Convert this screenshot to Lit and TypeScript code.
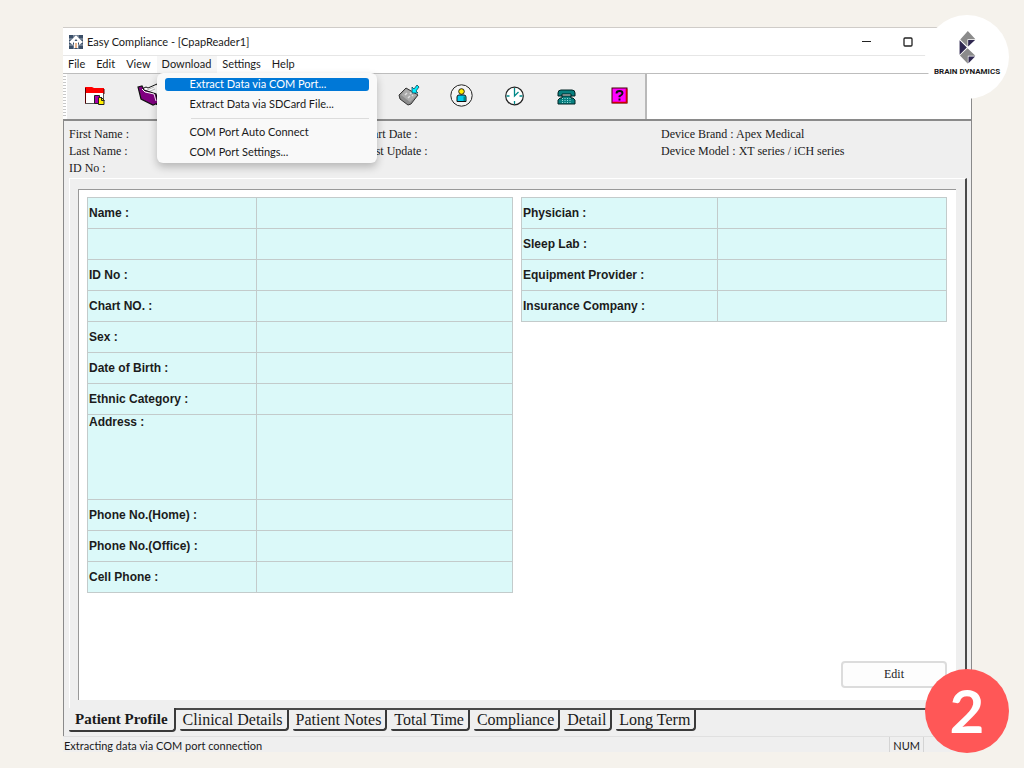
import { LitElement, html, css, svg } from "lit";
import { customElement, property } from "lit/decorators.js";
import { classMap } from "lit/directives/class-map.js";

const ICONS: Record<string, unknown> = {
  records: svg`
    <path d="M5.500 9.500h18v14h-18z" fill="#fff" stroke="#555" />
    <path d="M5 7h7l2 1h10v5H5z" fill="#f00" />
    <path d="M5.500 23.500V8M24 9v5" stroke="#500" />
    <path d="M14.500 15.500h5v8h-5z" fill="#a0a" stroke="#222" />
    <path d="M18.500 17.500h3l2.500 2.500v4.500h-5.500z" fill="#fe0" stroke="#222" />
    <path d="M21.500 17v3.500h3" fill="none" stroke="#222" />`,
  folder: svg`
    <path d="M9 9l4-2 2 1 9-4 4 14-4 7z" fill="#fff" stroke="#111" />
    <path d="M12 11l9-4M13 13l9-4" stroke="#bbb" />
    <path d="M5 7l4-1 2 4 12 4 2 9-5 2-12-6z" fill="#800080" stroke="#111" stroke-width="1.200" />
    <path d="M9 9l3 3 9 2 2 7" fill="none" stroke="#fff" />`,
  download: svg`
    <path d="M5 15l7-7 12 7-7 9-3 1-8-6z" fill="#8c8c8c" stroke="#333" />
    <path d="M12 9l11 6-7 7-9-7z" fill="#aaa" />
    <path d="M11 15l2-2m1 5l2-2m0-2l2-2m0 4l1-1" stroke="#ddd" stroke-width="1.500" />
    <path d="M18 7v6h6l-2-2 3-4-2-2-3 4z" fill="#0ef" stroke="#145" stroke-width=".8" />`,
  patient: svg`
    <circle cx="14.500" cy="15.500" r="10.700" fill="#f4f4f4" stroke="#222" />
    <circle cx="14.500" cy="11.500" r="2.800" fill="#fe0" stroke="#111" stroke-width=".9" />
    <path d="M10 21.500V17q0-2 2-2h5q2 0 2 2v4.500z" fill="#0ce" stroke="#111" />
    <path d="M16.500 16.500v4.500h2v-4.500z" fill="#088" />`,
  clock: svg`
    <circle cx="15.500" cy="16" r="8.800" fill="#fff" stroke="#222" stroke-width="1.200" />
    <path d="M15.500 8v8l4-4M15.500 21v3M7.500 16h3M20.500 16h3" fill="none" stroke="#088" stroke-width="1.300" />`,
  phone: svg`
    <path d="M7 15v-2q0-3 3-3h11q3 0 3 3v3h-4v-2h-9v2H7z" fill="#088080" stroke="#022" />
    <path d="M11 16h9v2h2l2 2v4H7v-4l2-2h2z" fill="#088080" stroke="#022" />
    <path d="M11 18.500h9M11 20.500h9M11 22.500h9" stroke="#9dd" stroke-dasharray="1 1.500" />`,
  help: svg`
    <rect x="8" y="8" width="15" height="15" fill="#f0f" stroke="#400" />
    <path d="M8.500 22.500h14V9" fill="none" stroke="#c00" stroke-width="1.600" />
    <path d="M12.500 13.500q0-2.500 3-2.500t3 2.300q0 1.500-3 3v1M15.500 18.500v2" fill="none" stroke="#111" stroke-width="1.900" />`,
};

const TOOLS = [
  { icon: "records", label: "Records", slot: 1 },
  { icon: "folder", label: "Open", slot: 2 },
  { icon: "download", label: "Download", slot: 7 },
  { icon: "patient", label: "Patient", slot: 8 },
  { icon: "clock", label: "Time", slot: 9 },
  { icon: "phone", label: "Phone", slot: 10 },
  { icon: "help", label: "Help", slot: 11 },
];

const MENUS = ["File", "Edit", "View", "Download", "Settings", "Help"];
const COMMANDS = [
  ["Extract Data via COM Port...", "Extract Data via SDCard File..."],
  ["COM Port Auto Connect", "COM Port Settings..."],
];
const TABS = ["Patient Profile", "Clinical Details", "Patient Notes", "Total Time", "Compliance", "Detail", "Long Term"];
const PERSONAL = ["Name :", "", "ID No :", "Chart NO. :", "Sex :", "Date of Birth :", "Ethnic Category :", "Address :", "Phone No.(Home) :", "Phone No.(Office) :", "Cell Phone :"];
const PROVIDERS = ["Physician :", "Sleep Lab :", "Equipment Provider :", "Insurance Company :"];

@customElement("profile-table")
export class ProfileTable extends LitElement {
  @property({ attribute: false }) rows: string[] = [];
  @property() tall = "";

  static styles = css`
    :host { display: block; }
    table { width: 100%; border-collapse: collapse; table-layout: fixed; background: #dbf9f9; }
    th, td { box-sizing: border-box; height: 31px; padding: 0 1px; border: 1px solid #c3cbcb; }
    th { width: var(--label-width, 40%); text-align: left; font: bold 12px/14px "Liberation Sans", Arial, sans-serif; color: #1c1c1c; }
    .tall th { height: 85px; vertical-align: top; }
  `;

  render() {
    return html`<table>
      <tbody>
        ${this.rows.map((label) => html`<tr class=${classMap({ tall: label !== "" && label === this.tall })}>
          <th scope="row">${label}</th><td></td>
        </tr>`)}
      </tbody>
    </table>`;
  }
}

@customElement("app-root")
export class AppRoot extends LitElement {
  static styles = css`
    :host {
      display: block; position: relative; box-sizing: border-box; min-height: 100vh;
      padding: 27px 52px 16px 63px; background: #f5f2ec; color: #1a1a1a;
      font: 11px/15px Lato, "Open Sans", sans-serif;
    }
    button { margin: 0; padding: 0; border: 0; background: none; color: inherit; font: inherit; text-align: left; }
    svg { display: block; }
    .window { display: flex; flex-direction: column; min-height: calc(100vh - 43px); background: #efefef; }
    .titlebar {
      box-sizing: border-box; height: 29px; display: flex; align-items: center; gap: 4px; padding: 0 59px 0 6px;
      background: #fff; border-top: 1px solid #cfccc8; border-bottom: 1px solid #e6e6e6;
    }
    .title { flex: 1; margin: 0; font: inherit; }
    .controls { display: flex; gap: 27px; }
    .menubar {
      box-sizing: border-box; height: 18px; display: flex; padding-right: 40px;
      background: #fff; border-bottom: 1px solid #bdbdbd;
    }
    .menu { position: relative; display: flex; }
    .menu > button { padding: 0 6px 2px 5px; }
    .menu.open > button { background: #f6f6f6; }
    .popup {
      position: absolute; z-index: 2; top: 100%; left: 0; box-sizing: border-box; width: 220px;
      display: flex; flex-direction: column; gap: 7px; padding: 5px 8px 4px;
      background: #f9f9f9; border-radius: 6px; box-shadow: 0 4px 9px rgba(0, 0, 0, .24);
    }
    .popup button { padding: 0 25px 2px; line-height: 11px; border-radius: 3px; white-space: nowrap; }
    .popup .current { background: #0078d7; color: #fff; }
    .popup hr { width: 178px; height: 1px; margin: 0 0 0 26px; border: 0; background: #dcdcdc; }
    .toolbar {
      display: flex; height: 45px; background: #fff; border-bottom: 2px solid #8a8a8a;
      border-right: 1px solid #8a8a8a;
    }
    .grip { width: 3px; margin: 2px 1px 2px 0; background: repeating-linear-gradient(#c8c8c8 0 1px, #fff 1px 3px); }
    .tools {
      flex: 0 0 580px; box-sizing: border-box; padding: 0 0 2px 2px;
      display: grid; grid-template-columns: repeat(11, 1fr); align-items: center; justify-items: center;
      background: #efefef; border-right: 2px solid #b9b9b9;
    }
    .client {
      flex: 1; display: flex; flex-direction: column; padding: 5px 4px 5px 5px;
      border: 1px solid #8a8a8a; border-width: 0 1px;
    }
    .info {
      display: grid; grid-template-columns: 294px 298px 1fr; height: 52px;
      font: 12px/17px "Liberation Serif", "Times New Roman", serif;
    }
    .info p { margin: 0; }
    .panel {
      flex: 1; display: flex; padding: 10px 9px 8px 8px;
      border: solid #fff; border-width: 1px 2px 2px 1px; border-right-color: #4a4a4a; border-bottom-color: #4a4a4a;
    }
    .page {
      flex: 1; display: flex; flex-direction: column; justify-content: space-between; padding: 7px 9px 12px 8px;
      background: #fff; border: solid #999; border-width: 1px 0 0 1px;
    }
    .tables { display: grid; grid-template-columns: 1fr 1fr; gap: 8px; align-items: start; }
    .personal { --label-width: 169px; }
    .providers { --label-width: 196px; }
    .edit {
      align-self: flex-end; box-sizing: border-box; width: 106px; height: 27px; text-align: center;
      background: #fdfdfd; border: 2px solid #dcdcdc; border-radius: 4px;
      font: 12px/17px "Liberation Serif", "Times New Roman", serif;
    }
    .tabs { display: flex; gap: 4px; height: 21px; align-items: flex-start; }
    .tabs button {
      box-sizing: border-box; height: 21px; padding: 0 4px 0 3px;
      border: solid #3a3a3a; border-width: 0 2px 2px 0; border-radius: 0 0 4px 2px;
      font: 16px/19px "Liberation Serif", "Times New Roman", serif; white-space: nowrap;
    }
    .tabs .active {
      height: 24px; margin-top: -2px; padding: 0 6px; background: #efefef;
      font-weight: bold; font-size: 15px; line-height: 20px;
    }
    .statusbar {
      display: flex; justify-content: space-between; height: 15px; padding-right: 48px;
      border-top: 1px solid #e0e0e0; line-height: 17px;
    }
    .status { margin: 0 0 0 1px; }
    .num { padding: 0 3px; border: solid #d4d4d4; border-width: 0 1px; }
    .brand, .step { position: absolute; z-index: 3; right: 15px; width: 84px; height: 84px; border-radius: 50%; }
    .brand { top: 15px; box-sizing: border-box; display: flex; flex-direction: column; align-items: center; gap: 3px; padding-top: 16px; background: #fff; }
    .wordmark { font: bold 8px/10px Roboto, sans-serif; white-space: nowrap; }
    .step { bottom: 15px; background: #ff5757; color: #fff; font: bold 60px/82px Lato, sans-serif; text-align: center; }
  `;

  private popup() {
    return html`<div class="popup" role="menu">
      ${COMMANDS.map((group, g) => html`${g ? html`<hr />` : ""}${group.map(
        (name, i) => html`<button role="menuitem" class=${classMap({ current: g + i === 0 })}>${name}</button>`
      )}`)}
    </div>`;
  }

  render() {
    return html`
      <main class="window">
        <header class="titlebar">
          <svg width="14" height="14" viewBox="0 0 14 14" aria-hidden="true">
            <rect width="14" height="14" fill="#3b4f68" />
            <path d="M4 0h1v4H0v1M9 0v4h5M0 10h5v4M14 10H9v4" fill="none" stroke="#a4afbd" />
            <path d="M7 0l3 3.500L14 7l-4 3V7.500H9V13H5V7.500H4V10L0 7l4-3.500z" fill="#fff" />
            <path d="M7 4l1.500 2H5.500z" fill="#3b4f68" />
            <path d="M6 8h2v5H6z" fill="#e8b48c" />
          </svg>
          <h1 class="title">Easy Compliance - [CpapReader1]</h1>
          <div class="controls">
            <button aria-label="Minimize"><svg width="20" height="10" viewBox="0 0 20 10"><path d="M6 4.500h9" stroke="#222" /></svg></button>
            <button aria-label="Maximize"><svg width="10" height="10" viewBox="0 0 10 10"><rect x="1" y="1" width="8" height="8" rx="1" fill="none" stroke="#222" stroke-width="1.300" /></svg></button>
          </div>
        </header>
        <nav class="menubar">
          ${MENUS.map((name) => html`<div class=${classMap({ menu: true, open: name === "Download" })}>
            <button>${name}</button>${name === "Download" ? this.popup() : ""}
          </div>`)}
        </nav>
        <div class="toolbar">
          <div class="grip"></div>
          <div class="tools">
            ${TOOLS.map((t) => html`<button aria-label=${t.label} style="grid-column: ${t.slot}">
              <svg width="32" height="32" viewBox="-1 0 32 32">${ICONS[t.icon]}</svg>
            </button>`)}
          </div>
        </div>
        <section class="client">
          <div class="info">
            <div><p>First Name :</p><p>Last Name :</p><p>ID No :</p></div>
            <div><p>Start Date :</p><p>Last Update :</p></div>
            <div><p>Device Brand : Apex Medical</p><p>Device Model : XT series / iCH series</p></div>
          </div>
          <div class="panel">
            <div class="page">
              <div class="tables">
                <profile-table class="personal" .rows=${PERSONAL} tall="Address :"></profile-table>
                <profile-table class="providers" .rows=${PROVIDERS}></profile-table>
              </div>
              <button class="edit">Edit</button>
            </div>
          </div>
          <div class="tabs" role="tablist">
            ${TABS.map((name, i) => html`<button role="tab" aria-selected=${i === 0} class=${classMap({ active: i === 0 })}>${name}</button>`)}
          </div>
        </section>
        <footer class="statusbar">
          <p class="status">Extracting data via COM port connection</p>
          <span class="num">NUM</span>
        </footer>
      </main>
      <div class="brand">
        <svg width="17" height="33" viewBox="354 62 50 100" aria-hidden="true">
          <path d="M380 62l23 25h-24v22l-22-21zM379 114l24 23h-23v24l-24-25z" fill="#8b8b8b" />
          <path d="M355 90l22 22-22 22zM381 89h21l-21 20zM382 139h20l-20 21z" fill="#2f2850" />
        </svg>
        <div class="wordmark">BRAIN DYNAMICS</div>
      </div>
      <div class="step">2</div>
    `;
  }
}
